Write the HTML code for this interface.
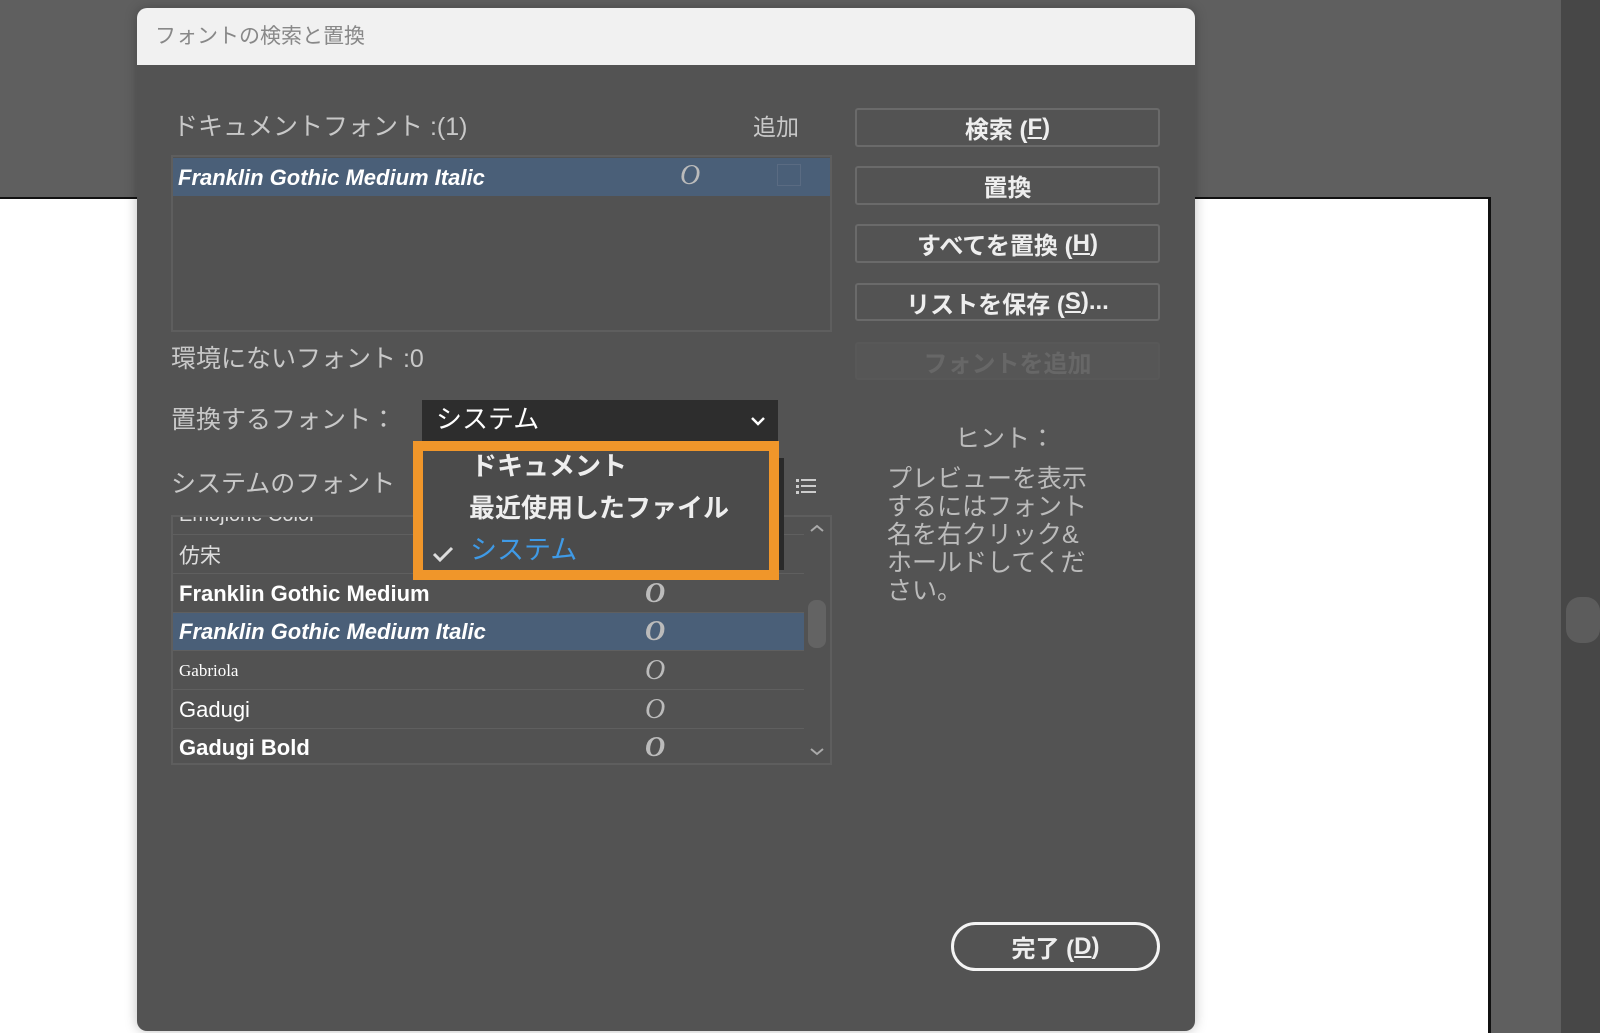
<!DOCTYPE html>
<html><head><meta charset="utf-8"><style>
*{margin:0;padding:0;box-sizing:border-box}
body{width:1600px;height:1033px;overflow:hidden;background:#5f5f5f;position:relative;font-family:"Liberation Sans","Noto Sans CJK JP",sans-serif}
.a{position:absolute}
.t{position:absolute;white-space:nowrap;line-height:1}
.btn{position:absolute;left:855px;width:305px;border:2px solid #6a6a6a;border-radius:3px;color:#eee;font-size:24px;font-weight:bold;text-align:center;display:flex;align-items:center;justify-content:center}
.row{position:absolute;left:0;width:631px;height:38px;border-bottom:1px solid #5f5f5f;color:#fff;font-size:22px;display:flex;align-items:center;padding-left:6px}
.o{position:absolute;left:472px;font-family:"Liberation Serif",serif;font-style:italic;font-size:28px;color:#bbb}
</style></head><body>
<div class="a" style="left:0;top:197px;width:1490px;height:836px;background:#fff;border-top:2px solid #111"></div>
<div class="a" style="left:1488px;top:197px;width:3px;height:836px;background:#111"></div>
<div class="a" style="left:1491px;top:0;width:70px;height:1033px;background:#5f5f5f"></div>
<div class="a" style="left:1561px;top:0;width:39px;height:1033px;background:#474747"></div>
<div class="a" style="left:1566px;top:597px;width:34px;height:46px;background:#5c5c5c;border-radius:14px"></div>

<div class="a" style="left:137px;top:8px;width:1058px;height:1023px;background:#535353;border-radius:10px;overflow:hidden;box-shadow:0 0 12px rgba(0,0,0,.25)">
 <div class="a" style="left:0;top:0;width:1058px;height:57px;background:#f1f1f1"></div>
 <div class="t" style="left:18px;top:18px;font-size:21px;color:#888">フォントの検索と置換</div>
</div>

<div class="t" style="left:173px;top:115px;font-size:25px;color:#c8c8c8">ドキュメントフォント :(1)</div>
<div class="t" style="left:753px;top:116px;font-size:23px;color:#c8c8c8">追加</div>
<div class="a" style="left:171px;top:155px;width:661px;height:177px;border:2px solid #5e5e5e;background:#525252"></div>
<div class="a" style="left:173px;top:158px;width:657px;height:38px;background:#4a5f78"></div>
<div class="t" style="left:178px;top:167px;font-size:22px;font-weight:bold;font-style:italic;color:#fff">Franklin Gothic Medium Italic</div>
<div class="t" style="left:680px;top:162px;font-family:'Liberation Serif',serif;font-style:italic;font-size:28px;color:#bbb">O</div>
<div class="a" style="left:777px;top:164px;width:24px;height:22px;border:1px solid #5a6b82"></div>

<div class="t" style="left:171px;top:347px;font-size:25px;color:#c8c8c8">環境にないフォント :0</div>
<div class="t" style="left:171px;top:408px;font-size:25px;color:#c8c8c8">置換するフォント：</div>
<div class="a" style="left:422px;top:400px;width:356px;height:41px;background:#2d2d2d"></div>
<div class="t" style="left:436px;top:406px;font-size:26px;color:#fff">システム</div>
<svg class="a" style="left:750px;top:415px" width="16" height="12"><path d="M2 3l6 6 6-6" stroke="#fff" stroke-width="2.5" fill="none"/></svg>

<div class="t" style="left:171px;top:472px;font-size:25px;color:#c8c8c8">システムのフォント</div>
<svg class="a" style="left:796px;top:478px" width="22" height="18"><g fill="#ccc"><rect x="0" y="1" width="3" height="3"/><rect x="0" y="7" width="3" height="3"/><rect x="0" y="13" width="3" height="3"/><rect x="5" y="1" width="15" height="2"/><rect x="5" y="7" width="15" height="2"/><rect x="5" y="13" width="15" height="2"/></g></svg>

<div class="a" style="left:171px;top:515px;width:661px;height:250px;border:2px solid #5e5e5e;background:#525252;overflow:hidden">
 <div class="row" style="top:-20px;font-size:20px;color:#ddd">Emojione Color</div>
 <div class="row" style="top:19px;font-size:21px;color:#ddd">仿宋</div>
 <div class="row" style="top:58px;font-weight:bold">Franklin Gothic Medium<span class="o">O</span></div>
 <div class="row" style="top:96px;font-weight:bold;font-style:italic;background:#4a5f78">Franklin Gothic Medium Italic<span class="o" style="font-style:italic">O</span></div>
 <div class="row" style="top:135px;font-family:'Liberation Serif',serif;font-size:17px">Gabriola<span class="o">O</span></div>
 <div class="row" style="top:174px">Gadugi<span class="o">O</span></div>
 <div class="row" style="top:212px;font-weight:bold">Gadugi Bold<span class="o">O</span></div>
 <div class="a" style="left:632px;top:0;width:27px;height:250px;background:#525252"></div>
 <div class="a" style="left:635px;top:83px;width:18px;height:48px;background:#636363;border-radius:8px"></div>
 <svg class="a" style="left:636px;top:6px" width="16" height="10"><path d="M2 8l6-5 6 5" stroke="#aaa" stroke-width="2" fill="none"/></svg>
 <svg class="a" style="left:636px;top:230px" width="16" height="10"><path d="M2 2l6 5 6-5" stroke="#aaa" stroke-width="2" fill="none"/></svg>
</div>

<div class="a" style="left:779px;top:458px;width:5px;height:112px;background:#2a2a2a"></div>
<div class="a" style="left:413px;top:441px;width:366px;height:139px;border:10px solid #f0962a;background:#4b4b4b"></div>
<div class="t" style="left:471px;top:453px;font-size:26px;font-weight:bold;color:#eee">ドキュメント</div>
<div class="t" style="left:469px;top:495px;font-size:26px;font-weight:bold;color:#eee">最近使用したファイル</div>
<svg class="a" style="left:432px;top:546px" width="22" height="16"><path d="M2 8l6 6 12-12" stroke="#ddd" stroke-width="3" fill="none"/></svg>
<div class="t" style="left:470px;top:537px;font-size:27px;color:#3f9ae6">システム</div>

<div class="btn" style="top:108px;height:39px">検索 (<u>F</u>)</div>
<div class="btn" style="top:166px;height:39px">置換</div>
<div class="btn" style="top:224px;height:39px">すべてを置換 (<u>H</u>)</div>
<div class="btn" style="top:283px;height:38px">リストを保存 (<u>S</u>)...</div>
<div class="btn" style="top:342px;height:38px;border-color:#585858;background:#565656;color:#676767">フォントを追加</div>

<div class="t" style="left:955px;top:427px;font-size:25px;color:#bbb">ヒント：</div>
<div class="a" style="left:887px;top:465px;font-size:25px;line-height:28px;color:#bbb;width:260px">プレビューを表示<br>するにはフォント<br>名を右クリック&amp;<br>ホールドしてくだ<br>さい。</div>

<div class="a" style="left:951px;top:922px;width:209px;height:49px;border:3px solid #f4f4f4;border-radius:25px;color:#eee;font-size:24px;font-weight:bold;display:flex;align-items:center;justify-content:center">完了 (<u>D</u>)</div>
</body></html>
